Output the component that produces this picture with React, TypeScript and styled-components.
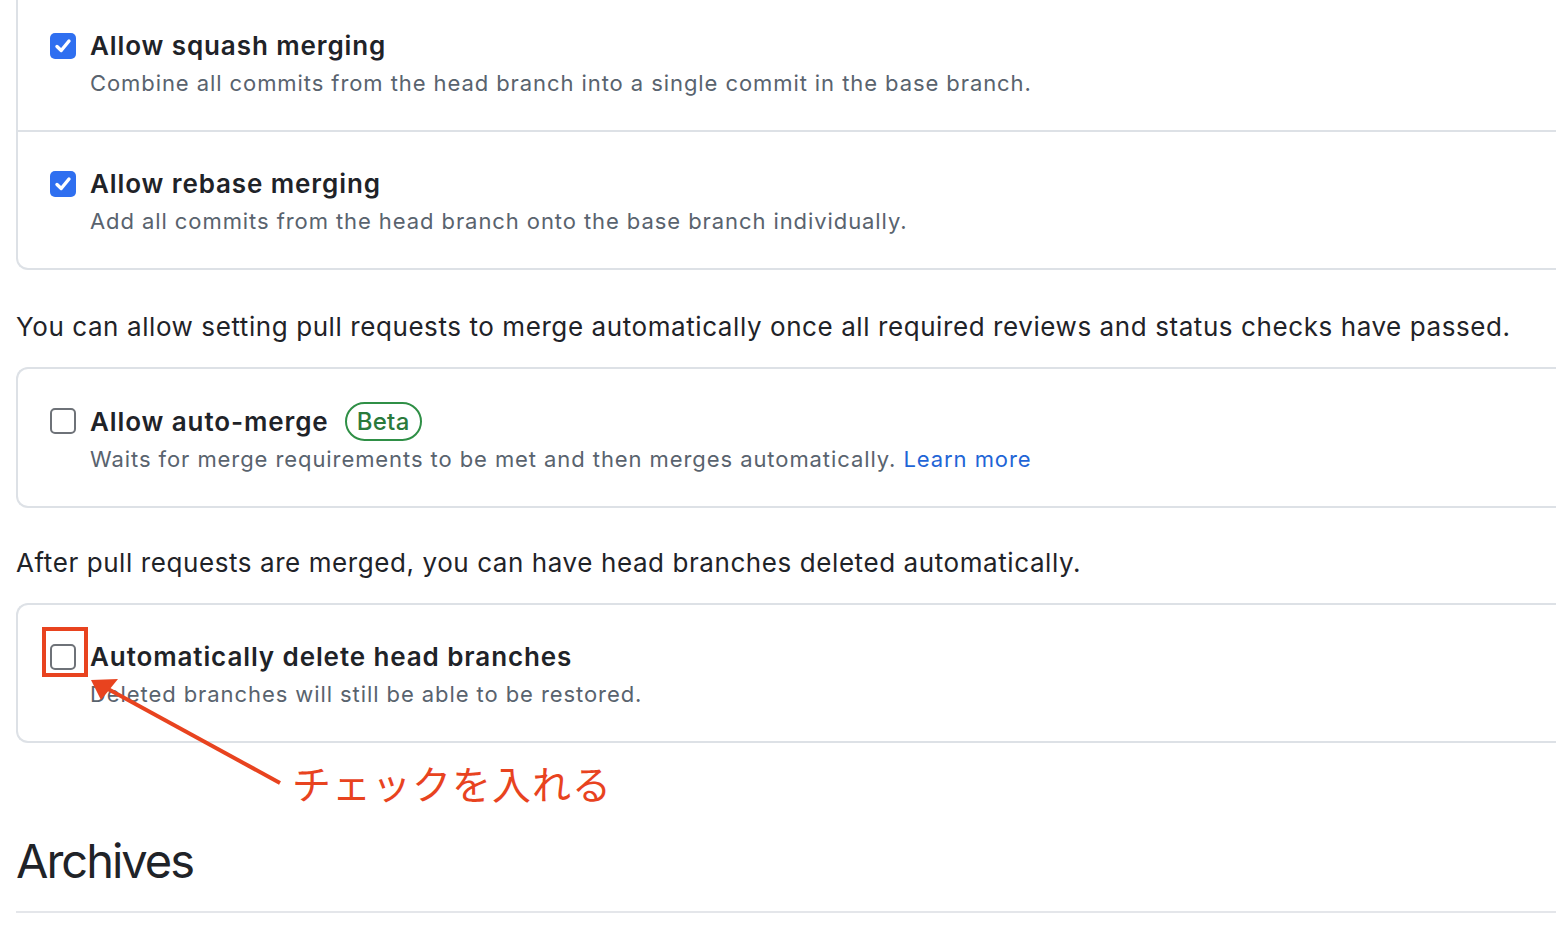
import React from "react";
import styled, { createGlobalStyle } from "styled-components";

const Global = createGlobalStyle`
  html, body { margin: 0; padding: 0; background: #ffffff; }
  body { font-family: Inter, "Liberation Sans", Arial, sans-serif; color: #1f2328; overflow: hidden; }
`;

const Page = styled.div`
  position: relative;
  width: 1556px;
  height: 928px;
  overflow: hidden;
  padding-left: 16px;
  box-sizing: border-box;
`;

const Box = styled.div<{ $first?: boolean }>`
  border: 2px solid #dde1e6;
  border-right: none;
  border-radius: 12px 0 0 12px;
  margin-top: ${(p) => (p.$first ? "-8px" : "0")};
  ${(p) => (p.$first ? "border-top-left-radius: 0;" : "")}
`;

const Row = styled.div<{ $divider?: boolean }>`
  display: flex;
  align-items: flex-start;
  gap: 14px;
  padding: 33px 32px 29px 32px;
  border-top: ${(p) => (p.$divider ? "2px solid #dde1e6" : "none")};
`;

const CheckBox = styled.span<{ $checked?: boolean }>`
  flex: none;
  width: 26px;
  height: 26px;
  margin-top: 6px;
  box-sizing: border-box;
  border-radius: 5px;
  display: flex;
  align-items: center;
  justify-content: center;
  background: ${(p) => (p.$checked ? "#2f6ff0" : "#ffffff")};
  border: ${(p) => (p.$checked ? "none" : "2px solid #6e7278")};
`;

const Texts = styled.div`
  display: flex;
  flex-direction: column;
`;

const TitleLine = styled.div`
  display: flex;
  align-items: center;
  gap: 16px;
  font-size: 26px;
  font-weight: 600;
  letter-spacing: 0.9px;
  line-height: 38px;
  color: #1f2328;
`;

const Desc = styled.div`
  font-size: 22px;
  letter-spacing: 0.92px;
  line-height: 36px;
  color: #59636e;
`;

const Link = styled.a`
  color: #1f65d6;
  text-decoration: none;
`;

const Badge = styled.span`
  display: inline-flex;
  align-items: center;
  height: 39px;
  box-sizing: border-box;
  padding: 0 10px;
  border: 2px solid #2f8f46;
  border-radius: 20px;
  font-size: 24px;
  font-weight: 500;
  letter-spacing: 0.3px;
  color: #2a7a3b;
`;

const Para = styled.p<{ $top: number; $bottom: number }>`
  margin: ${(p) => p.$top}px 0 ${(p) => p.$bottom}px 0;
  font-size: 26px;
  letter-spacing: 0.58px;
  line-height: 38px;
  color: #1f2328;
`;

const Heading = styled.h2`
  margin: 88px 0 0 0;
  font-size: 47px;
  font-weight: 400;
  letter-spacing: -2px;
  line-height: 60px;
  padding-bottom: 20px;
  border-bottom: 2px solid #e4e6ea;
  color: #1f2328;
`;

const Overlay = styled.svg`
  position: absolute;
  left: 0;
  top: 0;
  pointer-events: none;
`;

const Note = styled.span`
  position: absolute;
  left: 292px;
  top: 756px;
  font-family: "Noto Sans CJK JP", sans-serif;
  font-size: 39px;
  font-weight: 400;
  letter-spacing: 1px;
  line-height: 52px;
  color: #e8431f;
`;

const Check = () => (
  <svg width="20" height="20" viewBox="0 0 20 20">
    <path d="M4 10.5 L8.2 14.5 L16 5" fill="none" stroke="#fff" strokeWidth="3.4" strokeLinecap="round" strokeLinejoin="round" />
  </svg>
);

type OptionProps = {
  title: string;
  desc: React.ReactNode;
  checked?: boolean;
  divider?: boolean;
  badge?: string;
};

const Option = ({ title, desc, checked, divider, badge }: OptionProps) => (
  <Row $divider={divider}>
    <CheckBox $checked={checked}>{checked && <Check />}</CheckBox>
    <Texts>
      <TitleLine>
        {title}
        {badge && <Badge>{badge}</Badge>}
      </TitleLine>
      <Desc>{desc}</Desc>
    </Texts>
  </Row>
);

export default function App() {
  return (
    <>
      <Global />
      <Page>
        <Box $first>
          <Option
            checked
            title="Allow squash merging"
            desc="Combine all commits from the head branch into a single commit in the base branch."
          />
          <Option
            checked
            divider
            title="Allow rebase merging"
            desc="Add all commits from the head branch onto the base branch individually."
          />
        </Box>
        <Para $top={38} $bottom={21}>
          You can allow setting pull requests to merge automatically once all required reviews and status checks have passed.
        </Para>
        <Box>
          <Option
            title="Allow auto-merge"
            badge="Beta"
            desc={
              <>
                Waits for merge requirements to be met and then merges automatically. <Link href="#">Learn more</Link>
              </>
            }
          />
        </Box>
        <Para $top={36} $bottom={21}>
          After pull requests are merged, you can have head branches deleted automatically.
        </Para>
        <Box>
          <Option
            title="Automatically delete head branches"
            desc="Deleted branches will still be able to be restored."
          />
        </Box>
        <Heading>Archives</Heading>

        <Overlay width="1556" height="928" viewBox="0 0 1556 928">
          <rect x="44" y="629" width="42" height="46" fill="none" stroke="#e8431f" strokeWidth="4" />
          <line x1="280" y1="783" x2="108" y2="689" stroke="#e8431f" strokeWidth="4" />
          <polygon points="91,680 118,679 101,700" fill="#e8431f" />
        </Overlay>
        <Note>チェックを入れる</Note>
      </Page>
    </>
  );
}
